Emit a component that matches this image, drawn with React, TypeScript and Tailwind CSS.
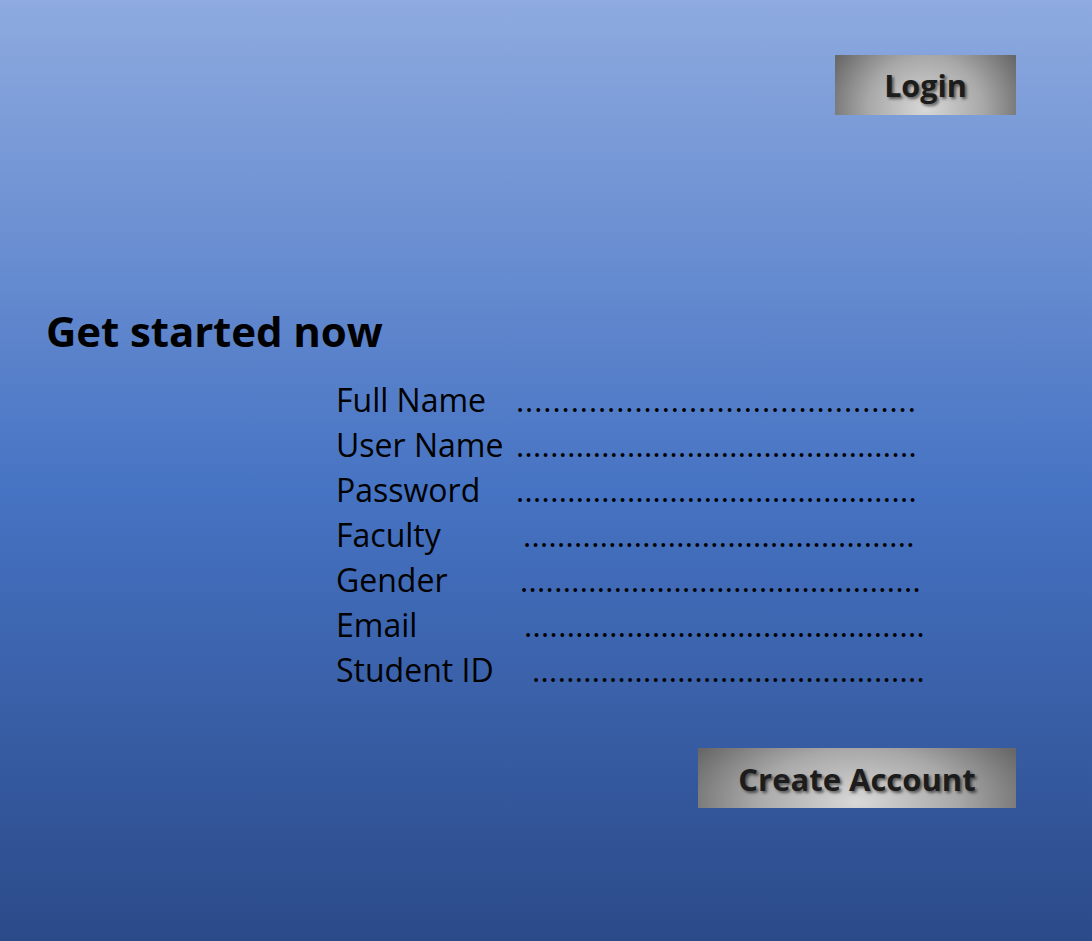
import React from "react";

const rows: { label: string; pad: string; width: string; count: number }[] = [
  { label: "Full Name", pad: "pl-[0px]", width: "w-[400px]", count: 44 },
  { label: "User Name", pad: "pl-[0px]", width: "w-[401px]", count: 47 },
  { label: "Password", pad: "pl-[0px]", width: "w-[401px]", count: 47 },
  { label: "Faculty", pad: "pl-[7px]", width: "w-[392px]", count: 46 },
  { label: "Gender", pad: "pl-[4px]", width: "w-[401px]", count: 47 },
  { label: "Email", pad: "pl-[8px]", width: "w-[401px]", count: 47 },
  { label: "Student ID", pad: "pl-[16px]", width: "w-[393px]", count: 46 },
];

function GrayButton({ children, className }: { children: React.ReactNode; className: string }) {
  return (
    <div
      className={`flex items-center justify-center font-bold text-[#1c1c1c] bg-[radial-gradient(ellipse_58%_160%_at_50%_90%,#d8d8d8_0%,#a8a8a8_55%,#686868_100%)] [text-shadow:2px_2px_3px_rgba(0,0,0,0.55)] ${className}`}
    >
      {children}
    </div>
  );
}

export default function App() {
  return (
    <div
      className="w-full h-[941px] overflow-hidden bg-[linear-gradient(to_bottom,#8eaadf_0%,#4673c3_52%,#2b4a89_100%)] text-black"
      style={{ fontFamily: '"Open Sans", "Noto Sans", sans-serif' }}
    >
      <div className="flex justify-end pt-[55px] pr-[76px]">
        <GrayButton className="w-[181px] h-[60px] text-[30.5px] pt-[2px]">Login</GrayButton>
      </div>

      <h1 className="mt-[195px] ml-[46px] text-[42px] font-bold leading-[42px] tracking-[-0.1px]">
        Get started now
      </h1>

      <div className="mt-[25px] ml-[336px] flex flex-col">
        {rows.map((r) => (
          <div key={r.label} className="flex items-baseline h-[45px] leading-[45px] text-[32px]">
            <span className="w-[180px] shrink-0 whitespace-nowrap">{r.label}</span>
            <span className={`${r.pad} shrink-0`}>
              <span className={`flex justify-between text-[31px] ${r.width}`}>
                {Array.from({ length: r.count }).map((_, i) => (
                  <span key={i}>.</span>
                ))}
              </span>
            </span>
          </div>
        ))}
      </div>

      <div className="flex justify-end pr-[76px] mt-[56px]">
        <GrayButton className="w-[318px] h-[60px] text-[31px] pt-[2px]">Create Account</GrayButton>
      </div>
    </div>
  );
}
